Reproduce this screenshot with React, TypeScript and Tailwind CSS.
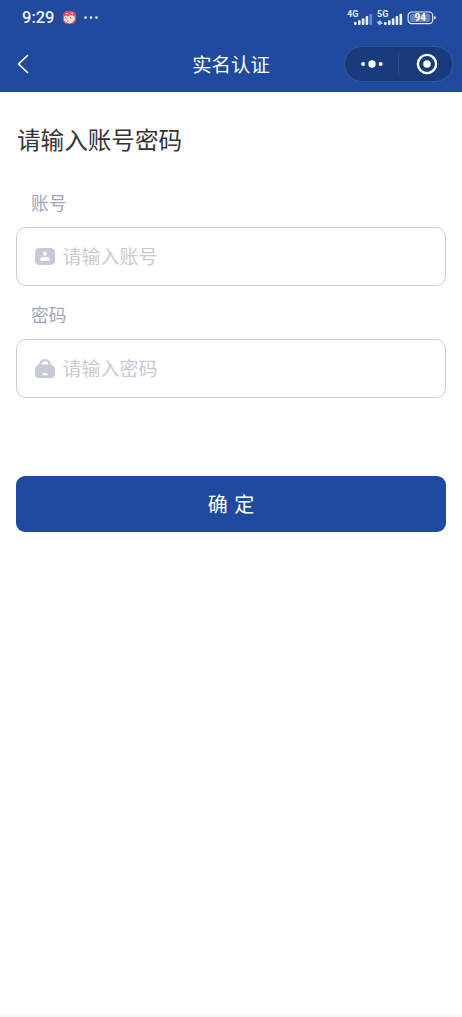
import type { ReactNode } from 'react';

function SignalBars({ label, data }: { label: string; data?: boolean }) {
  return (
    <svg className="h-5 w-[26px] shrink-0 overflow-visible" viewBox="0 -2 26 20" fill="#e9eef8">
      <text x="0" y="7.3" fontSize="9" fontWeight="700" fontFamily="Roboto, sans-serif">{label}</text>
      {data ? (
        <path d="M0.3 11.4h2V10l2.2 1.9H5v.9H0.3zM5.6 13.2v.9H3.4v1.3l-2-1.4H0.6v-.8z" />
      ) : null}
      <rect x="7" y="12" width="2.6" height="3" rx="0.8" />
      <rect x="11" y="10.2" width="2.6" height="4.8" rx="0.8" />
      <rect x="14.8" y="8.2" width="2.6" height="6.8" rx="0.8" />
      <rect x="18.6" y="6" width="2.6" height="9" rx="0.8" />
      <rect x="22.5" y="3.8" width="2.6" height="11.2" rx="0.8" fillOpacity={data ? 1 : 0.4} />
    </svg>
  );
}

function StatusBar() {
  return (
    <div className="flex h-[35px] items-center pl-[22px] pr-[25px] text-[#eef2fb]">
      <span className="w-[41px] pt-px font-['Roboto',sans-serif] text-[16.5px] font-medium leading-none">9:29</span>
      <svg className="h-[13px] w-[13px]" viewBox="0 0 13 13">
        <rect width="13" height="13" rx="4.5" fill="#dc5261" />
        <path d="M.8 5.8 3 4.4l2 1.2 2.8-1.8 3.6 1.4.6 3-2.2 3-3 1.4-4-1.4L1 9.2z" fill="#f4dddd" />
        <path d="M2.8 2.6 5.2 3M7.6 2.2l2.4.6" stroke="#f7c9cc" strokeWidth="1" />
        <path d="m2.2 6.2 1.4 2M6.8 6.4l1.6 1M4.2 10.6l1.2-.8" stroke="#cc4d57" strokeWidth="1" />
      </svg>
      <svg className="ml-2 h-1 w-[14px]" viewBox="0 0 14 4" fill="currentColor">
        <circle cx="1.6" cy="1.6" r="1.3" />
        <circle cx="7" cy="1.6" r="1.3" />
        <circle cx="12.4" cy="1.6" r="1.3" />
      </svg>
      <div className="ml-auto flex items-center">
        <div className="flex gap-1">
          <SignalBars label="4G" />
          <SignalBars label="5G" data />
        </div>
        <svg className="ml-1 h-[14px] w-[30px]" viewBox="0 0 30 14">
          <rect x="1.1" y="1" width="24.6" height="11.6" rx="3.6" fill="none" stroke="#e4eaf6" strokeWidth="1.2" />
          <rect x="3" y="2.7" width="20.2" height="8.2" rx="2" fill="#6883b9" />
          <path d="M27.2 5.1q1.7 0 1.7 1.7t-1.7 1.7z" fill="#e4eaf6" />
          <text x="13.2" y="10.4" textAnchor="middle" fontSize="10" fontWeight="700" fontFamily="Roboto, sans-serif" fill="#fff">94</text>
        </svg>
      </div>
    </div>
  );
}

function NavBar() {
  return (
    <div className="grid h-[57px] grid-cols-[1fr_auto_1fr] items-center px-[9px]">
      <button aria-label="返回" className="ml-2 w-fit">
        <svg className="h-5 w-3" viewBox="0 0 12 20" fill="none" stroke="#fff" strokeWidth="1.6">
          <path d="m11 1-9.4 9 9.4 9" />
        </svg>
      </button>
      <h1 className="text-[19.4px] leading-none text-white">实名认证</h1>
      <div className="flex h-9 w-[109px] items-center justify-self-end rounded-full border border-[#3457a0] bg-[#193a7b]">
        <button aria-label="更多" className="flex w-[53px] justify-center">
          <svg className="h-2 w-[22px]" viewBox="0 0 22 8" fill="#fff">
            <circle cx="2.1" cy="4" r="2" />
            <circle cx="11" cy="4" r="3.7" />
            <circle cx="19.7" cy="4" r="2" />
          </svg>
        </button>
        <span className="h-[22px] w-px bg-[#2b4b89]" />
        <button aria-label="关闭" className="flex flex-1 justify-center pl-0.5">
          <svg className="h-[22px] w-[22px]" viewBox="0 0 22 22">
            <circle cx="11" cy="11" r="9.1" fill="none" stroke="#fff" strokeWidth="2.4" />
            <circle cx="11" cy="11" r="3.8" fill="#fff" />
          </svg>
        </button>
      </div>
    </div>
  );
}

function AccountIcon() {
  return (
    <svg className="h-[17px] w-5 shrink-0" viewBox="0 0 20 17">
      <rect width="20" height="17" rx="4.5" fill="#c6cad6" />
      <circle cx="10" cy="5.8" r="2" fill="#fff" />
      <path d="M5.2 11.4Q5.2 9.3 8 9.3h4q2.8 0 2.8 2.1 0 1.5-1.5 1.5H6.7q-1.5 0-1.5-1.5" fill="#fff" />
    </svg>
  );
}

function LockIcon() {
  return (
    <svg className="h-[19px] w-5 shrink-0" viewBox="0 0 20 19">
      <path d="M4.8 7Q5.6 1.2 10 1.2T15.2 7" fill="none" stroke="#c6cad6" strokeWidth="2.3" />
      <path d="M4.3 5.4h11.4Q20 6.6 20 10.4v4.1q0 4.5-4.5 4.5h-11Q0 19 0 14.5v-4.1q0-3.8 4.3-5" fill="#c6cad6" />
      <rect x="7.5" y="14" width="5" height="2.2" rx="0.7" fill="#fff" />
    </svg>
  );
}

function Field({ label, placeholder, icon, type }: { label: string; placeholder: string; icon: ReactNode; type: string }) {
  return (
    <label className="block">
      <span className="flex h-[52.5px] items-center pl-[15px] pt-[5px] text-[17.7px] leading-none text-[#a0a4b8]">{label}</span>
      <span className="flex h-[59px] items-center rounded-[10px] border border-[#cacbd3] pl-[18px]">
        {icon}
        <input
          type={type}
          placeholder={placeholder}
          className="mb-0.5 ml-[7.5px] h-8 min-w-0 flex-1 bg-transparent text-[19px] text-[#333] outline-none placeholder:text-[#c8cad4]"
        />
      </span>
    </label>
  );
}

export default function App() {
  return (
    <div className="flex h-[1017px] w-full flex-col bg-white font-['Noto_Sans_CJK_SC',sans-serif]">
      <header className="h-[92px] shrink-0 bg-[#1f4a9d]">
        <StatusBar />
        <NavBar />
      </header>
      <main className="flex-1 px-4">
        <h2 className="flex h-[82.5px] items-center pl-px pt-[14px] text-[23.6px] leading-none text-[#333]">请输入账号密码</h2>
        <Field label="账号" placeholder="请输入账号" icon={<AccountIcon />} type="text" />
        <Field label="密码" placeholder="请输入密码" icon={<LockIcon />} type="password" />
        <button className="mt-[78.5px] h-14 w-full rounded-[9px] bg-[#1f4a9d] pb-px text-[20px] text-white [word-spacing:2px]">确 定</button>
      </main>
      <footer className="h-[3px] shrink-0 bg-[#f7f7f7]" />
    </div>
  );
}
